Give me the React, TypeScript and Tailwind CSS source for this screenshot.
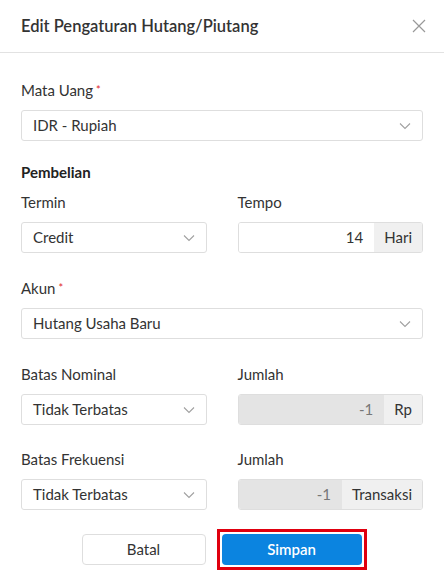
import React from "react";

const font = { fontFamily: '"Lato", "Noto Sans", sans-serif' };

function Chevron() {
  return (
    <svg width="12" height="8" viewBox="0 0 12 8" className="shrink-0">
      <path d="M1 1.5 L6 6.5 L11 1.5" fill="none" stroke="#a0a0a0" strokeWidth="1.1" />
    </svg>
  );
}

function Label({ text, required }: { text: string; required?: boolean }) {
  return (
    <div className="h-5 text-[15px] leading-5 text-[#333]">
      {text}
      {required && <span className="relative -top-[2px] text-[#e0252b] text-[11px] leading-none ml-[3px]">*</span>}
    </div>
  );
}

function Select({ value }: { value: string }) {
  return (
    <div className="mt-[10px] h-[31px] border border-[#dedede] rounded-[3px] bg-white flex items-center justify-between pl-[11px] pr-[11px]">
      <span className="text-[15px] text-[#333]">{value}</span>
      <Chevron />
    </div>
  );
}

function AddonInput({ value, addon, disabled }: { value: string; addon: string; disabled?: boolean }) {
  return (
    <div className="mt-[10px] h-[31px] border border-[#dedede] rounded-[3px] flex overflow-hidden">
      <div
        className={
          "flex-1 flex items-center justify-end pr-[11px] text-[15px] " +
          (disabled ? "bg-[#e4e4e4] text-[#777]" : "bg-white text-[#333]")
        }
      >
        {value}
      </div>
      <div className="bg-[#f0f0f0] flex items-center px-[10px] text-[15px] text-[#333]">{addon}</div>
    </div>
  );
}

function Row({
  left,
  leftValue,
  right,
  rightValue,
  addon,
  disabled,
}: {
  left: string;
  leftValue: string;
  right: string;
  rightValue: string;
  addon: string;
  disabled?: boolean;
}) {
  return (
    <div className="grid grid-cols-2 gap-[31px]">
      <div>
        <Label text={left} />
        <Select value={leftValue} />
      </div>
      <div>
        <Label text={right} />
        <AddonInput value={rightValue} addon={addon} disabled={disabled} />
      </div>
    </div>
  );
}

export default function App() {
  return (
    <div className="w-[444px] h-[588px] bg-white" style={font}>
      <div className="h-[53px] border-b border-[#e2e2e2] flex items-center justify-between pl-[21px] pr-[18px]">
        <h1 className="text-[16.5px] font-semibold text-[#333]">Edit Pengaturan Hutang/Piutang</h1>
        <svg width="14" height="14" viewBox="0 0 14 14">
          <path d="M1 1 L13 13 M13 1 L1 13" stroke="#999" strokeWidth="1.2" fill="none" />
        </svg>
      </div>

      <div className="px-[21px] pt-[27px] flex flex-col">
        <div>
          <Label text="Mata Uang" required />
          <Select value="IDR - Rupiah" />
        </div>

        <div className="mt-[21px] h-5 text-[15px] leading-5 font-bold text-[#222]">Pembelian</div>
        <div className="mt-[10px]">
          <Row left="Termin" leftValue="Credit" right="Tempo" rightValue="14" addon="Hari" />
        </div>

        <div className="mt-[25px]">
          <Label text="Akun" required />
          <Select value="Hutang Usaha Baru" />
        </div>

        <div className="mt-[25px]">
          <Row left="Batas Nominal" leftValue="Tidak Terbatas" right="Jumlah" rightValue="-1" addon="Rp" disabled />
        </div>

        <div className="mt-[24px]">
          <Row left="Batas Frekuensi" leftValue="Tidak Terbatas" right="Jumlah" rightValue="-1" addon="Transaksi" disabled />
        </div>

        <div className="mt-[19px] pl-[4px] flex justify-center items-center gap-[11px]">
          <button className="w-[124px] h-[31px] border border-[#dedede] rounded-[4px] bg-white text-[15px] text-[#333]">
            Batal
          </button>
          <div className="border-[3px] border-[#e0000f] p-[2px]">
            <button className="w-[140px] h-[31px] rounded-[4px] bg-[#0b84e0] text-white text-[15px] font-semibold">
              Simpan
            </button>
          </div>
        </div>
      </div>
    </div>
  );
}
